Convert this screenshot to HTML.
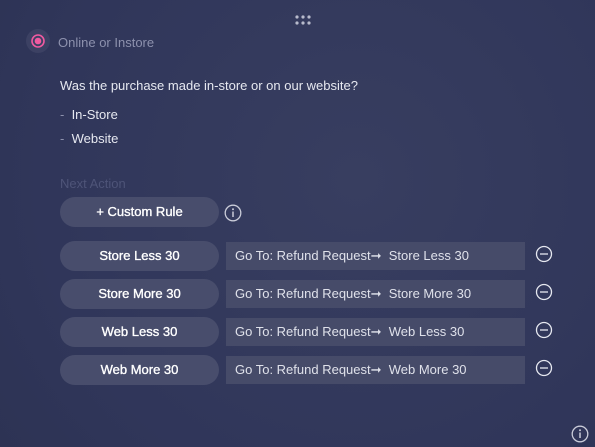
<!DOCTYPE html><html><head><style>
body{margin:0;width:595px;height:447px;overflow:hidden;background:radial-gradient(circle at 60% 40%,#383e60,#30365a 70%,#2d3354);font-family:"Liberation Sans",sans-serif;position:relative}
.a{position:absolute}
.t{color:#e6e8f0;font-size:13px}
.pill{position:absolute;left:60px;width:159px;height:30px;border-radius:15px;background:#484d6c;color:#fff;font-size:13px;font-weight:normal;-webkit-text-stroke:0.35px #fff;text-align:center;line-height:30px}
.box{position:absolute;left:226px;width:299px;height:28px;background:#464b69;color:#dfe1ea;font-size:13px;line-height:28px;padding-left:9px;box-sizing:border-box;white-space:pre}
</style></head><body>
<svg class="a" style="left:295px;top:15px" width="16" height="12"><g fill="#b8bbcc"><circle cx="2" cy="2" r="1.6"/><circle cx="8" cy="2" r="1.6"/><circle cx="14" cy="2" r="1.6"/><circle cx="2" cy="8" r="1.6"/><circle cx="8" cy="8" r="1.6"/><circle cx="14" cy="8" r="1.6"/></g></svg>
<svg class="a" style="left:26px;top:29px" width="24" height="24"><circle cx="12" cy="12" r="12" fill="#3c4163"/><circle cx="12" cy="12" r="6" fill="none" stroke="#f05aa0" stroke-width="1.6"/><circle cx="12" cy="12" r="3.3" fill="#f05aa0"/></svg>
<div class="a" style="left:58px;top:35px;color:#8d91ad;font-size:13px">Online or Instore</div>
<div class="a t" style="left:60px;top:78px">Was the purchase made in-store or on our website?</div>
<div class="a t" style="left:60px;top:107px"><span style="color:#8d91ad">-</span>&nbsp;&nbsp;In-Store</div>
<div class="a t" style="left:60px;top:131px"><span style="color:#8d91ad">-</span>&nbsp;&nbsp;Website</div>
<div class="a" style="left:60px;top:176px;color:#4e5478;font-size:13px">Next Action</div>
<div class="pill" style="top:197px">+ Custom Rule</div>
<svg class="a" style="left:224px;top:204px" width="18" height="18"><circle cx="9" cy="9" r="7.8" fill="none" stroke="#c9cbd8" stroke-width="1.3"/><circle cx="9" cy="5.3" r="1" fill="#c9cbd8"/><path d="M9 7.5V13" stroke="#c9cbd8" stroke-width="1.5"/></svg>
<div class="pill" style="top:241px">Store Less 30</div><div class="box" style="top:242px">Go To: Refund Request➞  Store Less 30</div>
<div class="pill" style="top:279px">Store More 30</div><div class="box" style="top:280px">Go To: Refund Request➞  Store More 30</div>
<div class="pill" style="top:317px">Web Less 30</div><div class="box" style="top:318px">Go To: Refund Request➞  Web Less 30</div>
<div class="pill" style="top:355px">Web More 30</div><div class="box" style="top:356px">Go To: Refund Request➞  Web More 30</div>
<svg class="a" style="left:535px;top:245px" width="18" height="140"><g fill="none" stroke="#e6e8f0" stroke-width="1.3"><circle cx="9" cy="9" r="7.5"/><path d="M5 9h8"/><circle cx="9" cy="47" r="7.5"/><path d="M5 47h8"/><circle cx="9" cy="85" r="7.5"/><path d="M5 85h8"/><circle cx="9" cy="123" r="7.5"/><path d="M5 123h8"/></g></svg>
<svg class="a" style="left:571px;top:425px" width="18" height="18"><circle cx="9" cy="9" r="7.8" fill="none" stroke="#c9cbd8" stroke-width="1.3"/><circle cx="9" cy="5.3" r="1" fill="#c9cbd8"/><path d="M9 7.5V13" stroke="#c9cbd8" stroke-width="1.5"/></svg>
</body></html>
